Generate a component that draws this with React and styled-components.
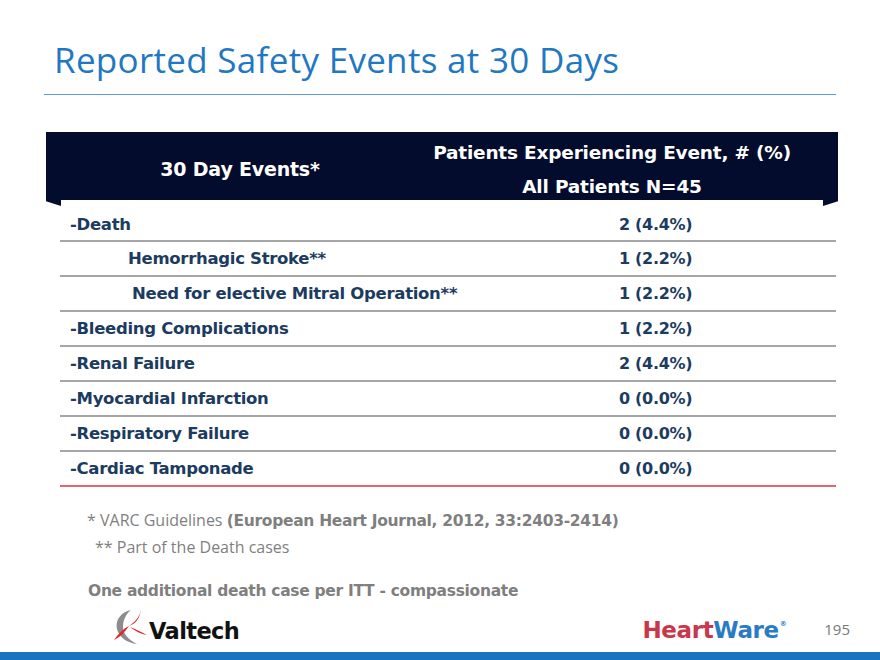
import React from "react";
import styled, { createGlobalStyle } from "styled-components";

const Global = createGlobalStyle`
  html, body { margin: 0; padding: 0; background: #fff; }
  body { font-family: "DejaVu Sans", sans-serif; }
`;

const Slide = styled.div`
  width: 880px;
  height: 660px;
  display: flex;
  flex-direction: column;
  overflow: hidden;
  background: #fff;
`;

const Title = styled.h1`
  margin: 0;
  padding: 38px 0 0 54px;
  height: 53px;
  font-family: "Open Sans", sans-serif;
  font-weight: 400;
  font-size: 35px;
  line-height: 44px;
  color: #1f78c1;
  letter-spacing: 0.3px;
`;

const Rule = styled.div`
  margin: 3px 44px 0 44px;
  height: 0;
  border-top: 1.5px solid #5c9bd6;
`;

const Table = styled.div`
  margin: 37px 0 0 46px;
  width: 792px;
  display: flex;
  flex-direction: column;
`;

const Header = styled.div`
  position: relative;
  height: 68px;
  background: #030c2c;
  display: grid;
  grid-template-columns: 388px 356px;
  color: #fff;
  font-family: "DejaVu Sans", sans-serif;
  font-weight: 700;

  &::before, &::after {
    content: "";
    position: absolute;
    top: 68px;
    width: 15px;
    height: 6px;
    background: #030c2c;
  }
  &::before {
    left: 0;
    clip-path: polygon(0 0, 100% 0, 100% 100%, 0 20%);
  }
  &::after {
    right: 0;
    clip-path: polygon(0 0, 100% 0, 100% 20%, 0 100%);
  }
`;

const HeadCell = styled.div`
  display: flex;
  flex-direction: column;
  align-items: center;
  justify-content: center;
  gap: 12px;
  line-height: 22px;
  white-space: nowrap;
  letter-spacing: -0.2px;
  font-size: ${(p) => (p.$big ? 19 : 18.5)}px;
  padding-top: ${(p) => (p.$big ? 6 : 7)}px;
`;

const Rows = styled.div`
  margin-left: 14px;
  width: 776px;
  display: flex;
  flex-direction: column;
`;

const Row = styled.div`
  display: grid;
  grid-template-columns: 559px 1fr;
  align-items: center;
  height: ${(p) => (p.$first ? 40 : 33)}px;
  border-bottom: ${(p) => (p.$last ? "2px solid #e2666b" : "2px solid #a6a6a6")};
  color: #1c3b60;
  font-family: "DejaVu Sans", sans-serif;
  font-weight: 700;
  font-size: 16.5px;
  letter-spacing: -0.3px;
`;

const Label = styled.div`
  padding-left: ${(p) => p.$indent}px;
  padding-top: ${(p) => (p.$first ? 9 : 0)}px;
  white-space: nowrap;
`;

const Value = styled.div`
  white-space: nowrap;
  padding-top: ${(p) => (p.$first ? 9 : 0)}px;
  font-size: 16px;
`;

const Notes = styled.div`
  margin: 20px 0 0 87px;
  display: flex;
  flex-direction: column;
  color: #7f7f7f;
  font-family: "Open Sans", sans-serif;
  font-size: 16px;
  line-height: 26px;
`;

const NoteLine = styled.div`
  padding-left: ${(p) => p.$indent || 0}px;
  white-space: nowrap;
  b { font-family: "DejaVu Sans", sans-serif; font-weight: 700; letter-spacing: -0.3px; font-size: 15.5px; }
`;

const Extra = styled.div`
  margin: 22px 0 0 88px;
  color: #7f7f7f;
  font-family: "DejaVu Sans", sans-serif;
  font-weight: 700;
  font-size: 15.5px;
  letter-spacing: -0.3px;
`;

const Footer = styled.div`
  margin-top: auto;
  display: flex;
  align-items: flex-end;
  padding: 0 30px 6px 112px;
  height: 46px;
`;

const Valtech = styled.div`
  display: flex;
  align-items: flex-end;
  gap: 1px;
`;

const ValtechText = styled.span`
  font-family: "DejaVu Sans", sans-serif;
  font-weight: 700;
  font-size: 22.5px;
  line-height: 26px;
  color: #111;
  letter-spacing: -0.6px;
  padding-bottom: 2px;
`;

const HeartWare = styled.div`
  margin-left: auto;
  font-family: "DejaVu Sans", sans-serif;
  font-weight: 700;
  font-size: 23px;
  line-height: 26px;
  letter-spacing: -0.4px;
  padding-bottom: 3px;
  span.h { color: #c8374a; }
  span.w { color: #2a7bc4; }
  sup { font-size: 7px; color: #2a7bc4; vertical-align: 12px; margin-left: 1px; }
`;

const PageNo = styled.div`
  margin-left: 38px;
  font-family: "Open Sans", sans-serif;
  font-size: 15px;
  color: #777;
  padding-bottom: 7px;
`;

const Bar = styled.div`
  height: 8px;
  background: #1b74bf;
`;

const rows = [
  ["-Death", "2 (4.4%)", 10],
  ["Hemorrhagic Stroke**", "1 (2.2%)", 68],
  ["Need for elective Mitral Operation**", "1 (2.2%)", 72],
  ["-Bleeding Complications", "1 (2.2%)", 10],
  ["-Renal Failure", "2 (4.4%)", 10],
  ["-Myocardial Infarction", "0 (0.0%)", 10],
  ["-Respiratory Failure", "0 (0.0%)", 10],
  ["-Cardiac Tamponade", "0 (0.0%)", 10],
];

const ValtechMark = () => (
  <svg width="36" height="38" viewBox="0 0 36 38">
    <path d="M19 2 C9 4 3 12 5 21 C7 29 15 35 25 36 C17 32 11 26 11 19 C11 12 14 6 19 2 Z" fill="#8c8c8c" />
    <path d="M29 1 C28 9 23 14 17 18 C23 16 28 11 29 1 Z" fill="#e0252b" />
    <path d="M17 18 C11 21 6 26 2 32 C8 29 13 24 17 18 Z" fill="#e0252b" />
    <path d="M18 19 C23 23 29 26 35 27 C29 24 24 21 18 19 Z" fill="#e0252b" />
  </svg>
);

export default function App() {
  return (
    <>
      <Global />
      <Slide>
        <Title>Reported Safety Events at 30 Days</Title>
        <Rule />
        <Table>
          <Header>
            <HeadCell $big>30 Day Events*</HeadCell>
            <HeadCell>
              <div>Patients Experiencing Event, # (%)</div>
              <div>All Patients N=45</div>
            </HeadCell>
          </Header>
          <Rows>
            {rows.map(([l, v, ind], i) => (
              <Row key={i} $first={i === 0} $last={i === rows.length - 1}>
                <Label $indent={ind} $first={i === 0}>{l}</Label>
                <Value $first={i === 0}>{v}</Value>
              </Row>
            ))}
          </Rows>
        </Table>
        <Notes>
          <NoteLine>* VARC Guidelines <b>(European Heart Journal, 2012, 33:2403-2414)</b></NoteLine>
          <NoteLine $indent={8}>** Part of the Death cases</NoteLine>
        </Notes>
        <Extra>One additional death case per ITT - compassionate</Extra>
        <Footer>
          <Valtech>
            <ValtechMark />
            <ValtechText>Valtech</ValtechText>
          </Valtech>
          <HeartWare>
            <span className="h">Heart</span>
            <span className="w">Ware</span>
            <sup>®</sup>
          </HeartWare>
          <PageNo>195</PageNo>
        </Footer>
        <Bar />
      </Slide>
    </>
  );
}
